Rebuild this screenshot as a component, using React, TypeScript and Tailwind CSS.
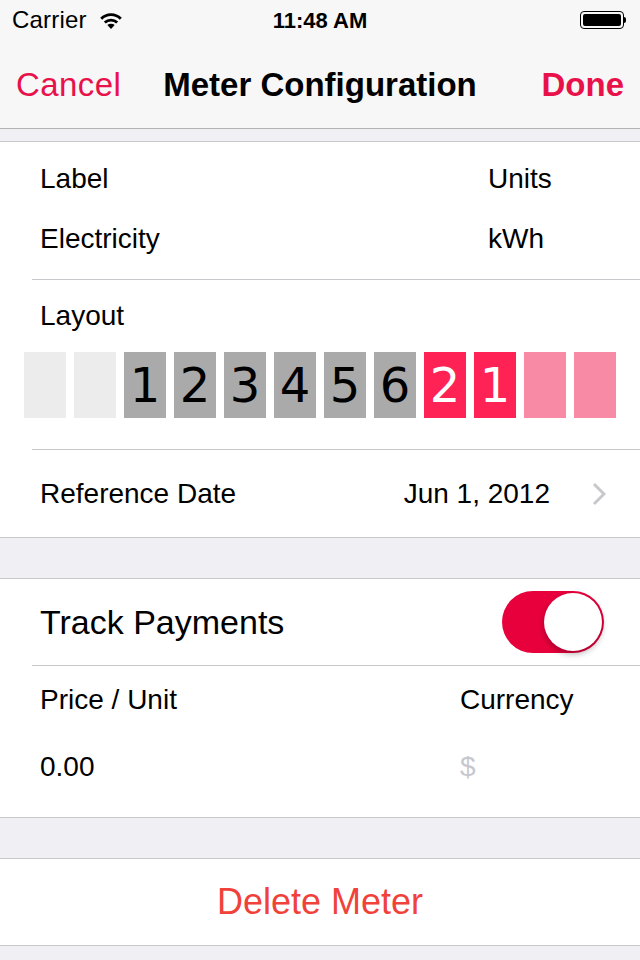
import React from 'react';

const digits: { d: string; kind: 'empty' | 'gray' | 'red' | 'pink' }[] = [
  { d: '', kind: 'empty' },
  { d: '', kind: 'empty' },
  { d: '1', kind: 'gray' },
  { d: '2', kind: 'gray' },
  { d: '3', kind: 'gray' },
  { d: '4', kind: 'gray' },
  { d: '5', kind: 'gray' },
  { d: '6', kind: 'gray' },
  { d: '2', kind: 'red' },
  { d: '1', kind: 'red' },
  { d: '', kind: 'pink' },
  { d: '', kind: 'pink' },
];

const boxColor = {
  empty: 'bg-[#ececec] text-black',
  gray: 'bg-[#aaaaaa] text-black',
  red: 'bg-[#ff2254] text-white',
  pink: 'bg-[#f98aa5] text-white',
};

function Wifi() {
  return (
    <svg width="24" height="19" viewBox="0 0 24 19" className="ml-[12px]">
      <path d="M12 18 L8.3 14.1 A5.4 5.4 0 0 1 15.7 14.1 Z" fill="#000" />
      <path d="M5.8 11.6 A8.9 8.9 0 0 1 18.2 11.6" stroke="#000" strokeWidth="2.8" fill="none" />
      <path d="M2.2 7.8 A13.8 13.8 0 0 1 21.8 7.8" stroke="#000" strokeWidth="2.8" fill="none" />
    </svg>
  );
}

function Battery() {
  return (
    <div className="flex items-center">
      <div className="w-[44px] h-[18px] rounded-[4px] border-[1.5px] border-black p-[2px]">
        <div className="w-full h-full bg-black rounded-[2px]" />
      </div>
      <div className="w-[2px] h-[6px] bg-black rounded-r-sm" />
    </div>
  );
}

export default function App() {
  return (
    <div
      className="w-[640px] h-[960px] bg-[#efeff4] overflow-hidden flex flex-col"
      style={{ fontFamily: '"Liberation Sans", Arial, sans-serif' }}
    >
      <div className="bg-[#f7f7f8] border-b border-[#b2b2b2]">
        <div className="h-10 relative flex items-center px-3 text-[24px] text-black">
          <span className="tracking-[0.2px]">Carrier</span>
          <Wifi />
          <span className="absolute left-0 right-0 text-center font-bold text-[22px] pointer-events-none">11:48 AM</span>
          <div className="ml-auto mr-[2px]">
            <Battery />
          </div>
        </div>
        <div className="h-[88px] flex items-center px-4 text-[33px] pt-[2px]">
          <span className="text-[#e8114a] w-[130px] tracking-[0.4px]">Cancel</span>
          <span className="flex-1 text-center font-bold text-black">Meter Configuration</span>
          <span className="text-[#e8114a] font-bold w-[130px] text-right">Done</span>
        </div>
      </div>

      <div className="h-[12px]" />

      <div className="bg-white border-y border-[#c8c7cc] text-[28px] text-black">
        <div className="h-[137px] flex flex-col pt-[7px] pl-10">
          <div className="h-[60px] flex items-center">
            <span className="w-[448px]">Label</span>
            <span>Units</span>
          </div>
          <div className="h-[60px] flex items-center">
            <span className="w-[448px]">Electricity</span>
            <span>kWh</span>
          </div>
        </div>
        <div className="ml-8 border-t border-[#c8c7cc]" />
        <div className="h-[169px] flex flex-col">
          <div className="h-[72px] flex items-center pl-10">Layout</div>
          <div className="flex gap-2 px-6">
            {digits.map((b, i) => (
              <div
                key={i}
                className={`w-[42px] h-[66px] flex items-center justify-center text-[48px] leading-none ${boxColor[b.kind]}`}
                style={{ fontFamily: '"DejaVu Sans", sans-serif' }}
              >
                {b.d}
              </div>
            ))}
          </div>
        </div>
        <div className="ml-8 border-t border-[#c8c7cc]" />
        <div className="h-[87px] flex items-center pl-10 pr-[34px]">
          <span>Reference Date</span>
          <span className="ml-auto">Jun 1, 2012</span>
          <svg width="14" height="24" viewBox="0 0 14 24" className="ml-[42px]">
            <path d="M2 2 L12 12 L2 22" stroke="#c7c7cc" strokeWidth="3" fill="none" />
          </svg>
        </div>
      </div>

      <div className="h-[40px]" />

      <div className="bg-white border-y border-[#c8c7cc] text-black">
        <div className="h-[86px] flex items-center pl-10 pr-[36px]">
          <span className="text-[34px]">Track Payments</span>
          <div className="ml-auto w-[102px] h-[62px] rounded-full bg-[#e8003d] flex items-center justify-end p-[2px]">
            <div className="w-[58px] h-[58px] rounded-full bg-white shadow-[0_3px_6px_rgba(0,0,0,0.3)]" />
          </div>
        </div>
        <div className="ml-8 border-t border-[#c8c7cc]" />
        <div className="h-[151px] flex flex-col pl-10 text-[28px] pt-[2px]">
          <div className="h-[64px] flex items-center">
            <span className="w-[420px]">Price / Unit</span>
            <span>Currency</span>
          </div>
          <div className="h-[70px] flex items-center">
            <span className="w-[420px]">0.00</span>
            <span className="text-[#c7c7cd]">$</span>
          </div>
        </div>
      </div>

      <div className="h-[40px]" />

      <div className="bg-white border-y border-[#c8c7cc] h-[88px] flex items-center justify-center text-[36px] text-[#f0423a]">
        Delete Meter
      </div>
    </div>
  );
}
